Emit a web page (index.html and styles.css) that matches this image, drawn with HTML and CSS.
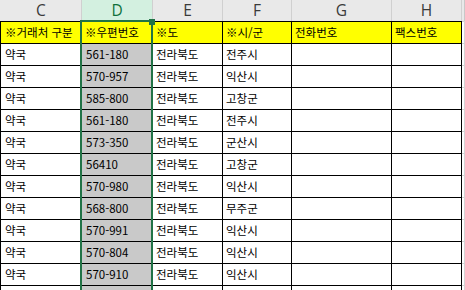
FILE: index.html
```html
<!DOCTYPE html>
<html lang="ko">
<head>
<meta charset="utf-8">
<link rel="stylesheet" href="styles.css">
</head>
<body>
<div class="sheet">
  <div class="grid">
    <div class="hd">C</div><div class="hd hd-sel">D</div><div class="hd">E</div><div class="hd">F</div><div class="hd">G</div><div class="hd">H</div><div class="hd hd-i"></div>

    <div class="c y first">※거래처 구분</div><div class="c y">※우편번호</div><div class="c y">※도</div><div class="c y">※시/군</div><div class="c y">전화번호</div><div class="c y">팩스번호</div><div class="c ci top"></div>

    <div class="c first">약국</div><div class="c g">561-180</div><div class="c">전라북도</div><div class="c">전주시</div><div class="c"></div><div class="c"></div><div class="c ci"></div>
    <div class="c first">약국</div><div class="c g">570-957</div><div class="c">전라북도</div><div class="c">익산시</div><div class="c"></div><div class="c"></div><div class="c ci"></div>
    <div class="c first">약국</div><div class="c g">585-800</div><div class="c">전라북도</div><div class="c">고창군</div><div class="c"></div><div class="c"></div><div class="c ci"></div>
    <div class="c first">약국</div><div class="c g">561-180</div><div class="c">전라북도</div><div class="c">전주시</div><div class="c"></div><div class="c"></div><div class="c ci"></div>
    <div class="c first">약국</div><div class="c g">573-350</div><div class="c">전라북도</div><div class="c">군산시</div><div class="c"></div><div class="c"></div><div class="c ci"></div>
    <div class="c first">약국</div><div class="c g">56410</div><div class="c">전라북도</div><div class="c">고창군</div><div class="c"></div><div class="c"></div><div class="c ci"></div>
    <div class="c first">약국</div><div class="c g">570-980</div><div class="c">전라북도</div><div class="c">익산시</div><div class="c"></div><div class="c"></div><div class="c ci"></div>
    <div class="c first">약국</div><div class="c g">568-800</div><div class="c">전라북도</div><div class="c">무주군</div><div class="c"></div><div class="c"></div><div class="c ci"></div>
    <div class="c first">약국</div><div class="c g">570-991</div><div class="c">전라북도</div><div class="c">익산시</div><div class="c"></div><div class="c"></div><div class="c ci"></div>
    <div class="c first">약국</div><div class="c g">570-804</div><div class="c">전라북도</div><div class="c">익산시</div><div class="c"></div><div class="c"></div><div class="c ci"></div>
    <div class="c first">약국</div><div class="c g">570-910</div><div class="c">전라북도</div><div class="c">익산시</div><div class="c"></div><div class="c"></div><div class="c ci"></div>
    <div class="c first"></div><div class="c g"></div><div class="c"></div><div class="c"></div><div class="c"></div><div class="c"></div><div class="c ci"></div>
  </div>
  <div class="sel"></div>
  <div class="handle"></div>
</div>
</body>
</html>
```

FILE: styles.css
```css
* { box-sizing: border-box; }
html, body {
  margin: 0;
  padding: 0;
  background: #ffffff;
  overflow: hidden;
}
.sheet {
  position: relative;
  width: 465px;
  height: 290px;
  overflow: hidden;
  font-family: "Noto Sans CJK KR", "Noto Sans", sans-serif;
}
.grid {
  display: grid;
  grid-template-columns: 82px 71px 70px 69px 100px 70px 3px;
  grid-template-rows: 21px 23px repeat(12, 22px);
}
.hd {
  background: #e9e9e9;
  border-right: 1px solid #d0d0d0;
  color: #3a3a3a;
  font-family: "Open Sans", "Noto Sans", sans-serif;
  font-size: 15.5px;
  line-height: 21px;
  text-align: center;
}
.hd:first-child { border-left: 1px solid #e9e9e9; }
.hd-sel {
  background: #d3f0e0;
  color: #0f703b;
}
.hd-i { border-right: 1px solid #c8c8c8; }
.c {
  border-right: 1px solid #000000;
  border-bottom: 1px solid #000000;
  font-size: 11.5px;
  line-height: 20px;
  padding-left: 3px;
  white-space: nowrap;
  overflow: hidden;
  color: #000000;
}
.y {
  background: #ffff00;
  border-top: 1px solid #000000;
  line-height: 20px;
}
.first {
  border-left: 1px solid #000000;
  padding-left: 4px;
}
.g {
  background: #c9c9c9;
  padding-left: 4px;
}
.ci {
  border-right: 1px solid #d4d4d4;
  border-bottom: 1px solid #d4d4d4;
  padding: 0;
}
.ci.top { border-top: 1px solid #d4d4d4; }
.sel {
  position: absolute;
  left: 80px;
  top: 20px;
  width: 73px;
  height: 280px;
  border: 2px solid #217346;
  border-bottom: none;
  pointer-events: none;
}
.handle {
  position: absolute;
  left: 149px;
  top: 19px;
  width: 6px;
  height: 6px;
  background: #217346;
}
```
